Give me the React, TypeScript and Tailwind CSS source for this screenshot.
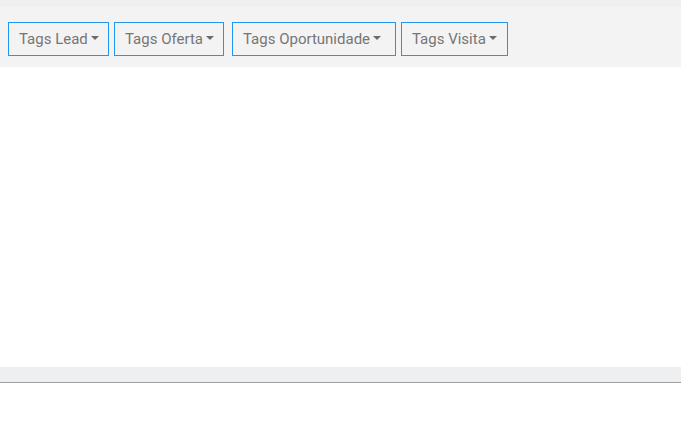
import React from "react";

const Caret = () => (
  <span className="ml-[3px] inline-block w-0 h-0 border-l-[4px] border-r-[4px] border-t-[4px] border-l-transparent border-r-transparent border-t-[#6b6b6b] translate-y-[-1px]" />
);

const Btn = ({ label, className = "" }: { label: string; className?: string }) => (
  <button
    className={`h-[34px] shrink-0 whitespace-nowrap flex items-center justify-start border border-[#2196f3] bg-transparent pl-[10px] pr-0 text-[15px] text-[#767676] ${className}`}
    style={{ fontFamily: "Roboto, 'Open Sans', sans-serif" }}
  >
    {label}
    <Caret />
  </button>
);

export default function App() {
  return (
    <div className="w-[681px] h-[421px] bg-white flex flex-col">
      <div className="h-[7px] bg-[#eeeff1]" />
      <div className="h-[60px] bg-[#f3f3f3] flex items-start pt-[15px] pl-[8px]">
        <Btn label="Tags Lead" className="w-[101px]" />
        <Btn label="Tags Oferta" className="ml-[5px] w-[110px]" />
        <Btn label="Tags Oportunidade" className="ml-[8px] w-[164px]" />
        <Btn label="Tags Visita" className="ml-[5px] w-[107px]" />
      </div>
      <div className="h-[300px] bg-white" />
      <div className="h-[16px] bg-[#eeeff1] border-b border-[#a0a0a0]" />
      <div className="flex-1 bg-white" />
    </div>
  );
}
